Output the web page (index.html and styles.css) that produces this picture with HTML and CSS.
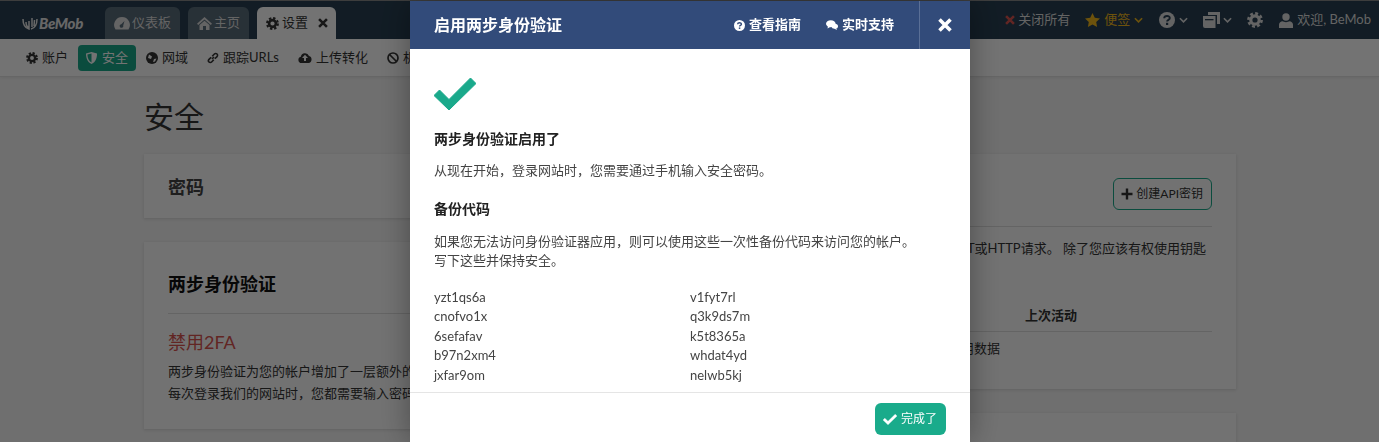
FILE: index.html
```html
<!DOCTYPE html>
<html lang="en">
<head>
  <meta charset="UTF-8">
  <title>BeMob - 安全</title>
  <link rel="stylesheet" href="styles.css">
</head>
<body>
  <svg class="icon-defs" width="0" height="0">
    <defs>
      <symbol id="i-gear" viewBox="0 0 16 16">
        <circle cx="8" cy="8" r="4.2" fill="none" stroke="currentColor" stroke-width="3.2"/>
        <circle cx="8" cy="8" r="6.6" fill="none" stroke="currentColor" stroke-width="2.6" stroke-dasharray="2.9 2.28"/>
      </symbol>
      <symbol id="i-check" viewBox="0 0 42 32">
        <path d="M0 17.5 L5.5 12 L15 21.5 L36.5 0 L42 5.5 L15 32 Z" fill="currentColor" stroke="currentColor" stroke-width="1" stroke-linejoin="round"/>
      </symbol>
      <symbol id="i-x" viewBox="0 0 14 14">
        <path d="M1.5 1.5 L12.5 12.5 M12.5 1.5 L1.5 12.5" fill="none" stroke="currentColor" stroke-width="3.6"/>
      </symbol>
      <symbol id="i-chev" viewBox="0 0 10 6">
        <path d="M1 1 L5 5 L9 1" fill="none" stroke="currentColor" stroke-width="1.8"/>
      </symbol>
    </defs>
  </svg>

  <header class="topbar">
    <div class="logo">
      <svg width="16" height="13" viewBox="0 0 16 13"><path d="M1 2 C1 8 3 11 7 12 L7 4 M9 12 C13 11 15 8 15 2 M4 5 C4 8 5 10 7 11 M10 1 L10 10 M12.500 3 L12 9" fill="none" stroke="currentColor" stroke-width="1.500"/></svg>
      <span>BeMob</span>
    </div>
    <nav class="tabs">
      <a class="tab">
        <svg width="16" height="13" viewBox="0 0 16 13"><path fill-rule="evenodd" d="M8 0 A8 8 0 0 1 14.500 12.500 L1.500 12.500 A8 8 0 0 1 8 0 Z M10.500 4 L7.300 7.200 A1.800 1.800 0 1 0 9.200 8.500 Z" fill="currentColor"/></svg>
        仪表板
      </a>
      <a class="tab">
        <svg width="15" height="13" viewBox="0 0 15 13"><path d="M7.500 0 L15 6.800 L13.800 8 L7.500 2.400 L1.200 8 L0 6.800 Z M2.500 8 L7.500 3.700 L12.500 8 L12.500 13 L9 13 L9 9 L6 9 L6 13 L2.500 13 Z" fill="currentColor"/></svg>
        主页
      </a>
      <a class="tab tab-on">
        <svg width="13" height="13"><use href="#i-gear"/></svg>
        设置
        <svg class="tab-x" width="10" height="10"><use href="#i-x"/></svg>
      </a>
    </nav>
    <div class="top-right">
      <a class="top-item"><svg class="close-red" width="10" height="10"><use href="#i-x"/></svg>关闭所有</a>
      <a class="top-item notes">
        <svg width="15" height="14" viewBox="0 0 15 14"><path d="M7.500 0 L9.800 4.700 L15 5.400 L11.200 9 L12.100 14 L7.500 11.600 L2.900 14 L3.800 9 L0 5.400 L5.200 4.700 Z" fill="currentColor"/></svg>
        便签
        <svg width="9" height="6"><use href="#i-chev"/></svg>
      </a>
      <a class="top-item help">
        <svg width="16" height="16" viewBox="0 0 16 16"><circle cx="8" cy="8" r="8" fill="currentColor"/><path d="M5.200 6.200 C5.300 3.300 10.800 3.200 10.800 6.100 C10.800 8 8.100 7.800 8.100 9.600" fill="none" stroke="#283f52" stroke-width="1.900"/><rect x="7" y="10.800" width="2.200" height="2.200" fill="#283f52"/></svg>
        <svg width="9" height="6"><use href="#i-chev"/></svg>
      </a>
      <a class="top-item copy">
        <svg width="17" height="16" viewBox="0 0 17 16"><path d="M5 0 H17 V12 H14 V3 H5 Z M0 4 H12.500 V16 H2 A2 2 0 0 1 0 14 Z" fill="currentColor"/><rect x="2" y="7" width="8.500" height="1.300" fill="#283f52"/></svg>
        <svg width="9" height="6"><use href="#i-chev"/></svg>
      </a>
      <a class="top-item gear"><svg width="16" height="16"><use href="#i-gear"/></svg></a>
      <a class="top-item user">
        <svg width="14" height="15" viewBox="0 0 14 15"><circle cx="7" cy="4" r="3.700"/><path d="M0 15 V11.500 C0 9.500 2 8.500 3.500 8.300 C5 9.400 9 9.400 10.500 8.300 C12 8.500 14 9.500 14 11.500 V15 Z"/></svg>
        欢迎, BeMob
      </a>
    </div>
  </header>

  <nav class="subnav">
    <a class="sub"><svg width="12" height="12"><use href="#i-gear"/></svg>账户</a>
    <a class="sub sub-on">
      <svg width="11" height="12" viewBox="0 0 11 12"><path d="M0 1.500 L5.500 0 L11 1.500 C11 7 9 10.500 5.500 12 C2 10.500 0 7 0 1.500 Z" fill="currentColor"/><path d="M5.500 1.500 V10.500 C3 9.200 1.500 6.500 1.400 2.600 Z" fill="#1aa98b"/></svg>
      安全
    </a>
    <a class="sub">
      <svg width="12" height="12" viewBox="0 0 12 12"><circle cx="6" cy="6" r="6" fill="currentColor"/><path d="M3 2.500 L6 4.500 L5 7 L2 6 Z M8 7 L10.500 6.500 L9 9.500 L7 10 Z" fill="#fff"/></svg>
      网域
    </a>
    <a class="sub">
      <svg width="12" height="12" viewBox="0 0 12 12"><path d="M5 7 L7 5 M4.200 5.200 L2 7.400 A1.800 1.800 0 0 0 4.600 10 L6.800 7.800 M5.200 4.200 L7.400 2 A1.800 1.800 0 0 1 10 4.600 L7.800 6.800" fill="none" stroke="currentColor" stroke-width="1.600"/></svg>
      跟踪URLs
    </a>
    <a class="sub">
      <svg width="14" height="11" viewBox="0 0 14 11"><path d="M3.500 11 A3.200 3.200 0 0 1 2.800 4.700 A4.300 4.300 0 0 1 11 4 A3.600 3.600 0 0 1 10.500 11 Z" fill="currentColor"/><path d="M7 2.800 L10 6 H8 V9 H6 V6 H4 Z" fill="#fff"/></svg>
      上传转化
    </a>
    <a class="sub">
      <svg width="12" height="12" viewBox="0 0 12 12"><circle cx="6" cy="6" r="5" fill="none" stroke="currentColor" stroke-width="1.700"/><path d="M2.500 2.500 L9.500 9.500" stroke="currentColor" stroke-width="1.700"/></svg>
      机器人
    </a>
  </nav>

  <main class="page">
    <h1 class="page-title">安全</h1>
    <div class="cols">
      <div class="col">
        <section class="card card-pass"><h3>密码</h3></section>
        <section class="card card-2fa">
          <h3 class="card-head">两步身份验证</h3>
          <h4 class="danger">禁用2FA</h4>
          <p>两步身份验证为您的帐户增加了一层额外的<br>每次登录我们的网站时，您都需要输入密码</p>
        </section>
      </div>
      <div class="col">
        <section class="card card-api">
          <div class="api-head">
            <button class="btn-outline">
              <svg width="12" height="12" viewBox="0 0 12 12"><path d="M6 0.500 V11.500 M0.500 6 H11.500" stroke="currentColor" stroke-width="2.400"/></svg>
              创建API密钥
            </button>
          </div>
          <div class="api-text"><span>GET或HTTP请求。 除了您应该有权使用钥匙</span></div>
          <div class="api-table">
            <div class="api-th">上次活动</div>
            <div class="api-td">可用数据</div>
          </div>
        </section>
        <section class="card card-next"></section>
      </div>
    </div>
  </main>

  <div class="overlay"></div>

  <div class="modal">
    <div class="modal-head">
      <h2>启用两步身份验证</h2>
      <a class="head-link">
        <svg width="11" height="11" viewBox="0 0 16 16"><circle cx="8" cy="8" r="8" fill="#fff"/><path d="M5.200 6.200 C5.300 3.300 10.800 3.200 10.800 6.100 C10.800 8 8.100 7.800 8.100 9.600" fill="none" stroke="#324b7a" stroke-width="2"/><rect x="7" y="10.800" width="2.200" height="2.200" fill="#324b7a"/></svg>
        查看指南
      </a>
      <a class="head-link">
        <svg width="12" height="10" viewBox="0 0 12 10"><ellipse cx="4.800" cy="3.800" rx="4.800" ry="3.500" fill="#fff"/><path d="M2 6 L1.500 8.500 L5 6.500 Z" fill="#fff"/><ellipse cx="8.800" cy="6.300" rx="3.200" ry="2.500" fill="#fff"/><path d="M10 8 L11 10 L8 8.500 Z" fill="#fff"/></svg>
        实时支持
      </a>
      <button class="modal-close"><svg width="14" height="14"><use href="#i-x"/></svg></button>
    </div>
    <div class="modal-body">
      <svg class="big-check" width="42" height="32"><use href="#i-check"/></svg>
      <h4>两步身份验证启用了</h4>
      <p>从现在开始，登录网站时，您需要通过手机输入安全密码。</p>
      <h4 class="backup-head">备份代码</h4>
      <p>如果您无法访问身份验证器应用，则可以使用这些一次性备份代码来访问您的帐户。<br>写下这些并保持安全。</p>
      <div class="codes">
        <span>yzt1qs6a</span><span>v1fyt7rl</span>
        <span>cnofvo1x</span><span>q3k9ds7m</span>
        <span>6sefafav</span><span>k5t8365a</span>
        <span>b97n2xm4</span><span>whdat4yd</span>
        <span>jxfar9om</span><span>nelwb5kj</span>
      </div>
    </div>
    <div class="modal-foot">
      <button class="btn-done"><svg width="14" height="11"><use href="#i-check"/></svg>完成了</button>
    </div>
  </div>
</body>
</html>
```

FILE: styles.css
```css
* {
  box-sizing: border-box;
}
html,
body {
  height: 442px;
  overflow: hidden;
}
body {
  margin: 0;
  background: #f5f5f5;
  color: #333;
  font-family: Lato, "Noto Sans CJK SC", sans-serif;
  font-size: 13px;
  line-height: 19.5px;
}
svg {
  flex: none;
}
.icon-defs {
  position: absolute;
}
h1, h2, h3, h4, p {
  margin: 0;
}

/* Top bar */
.topbar {
  display: flex;
  align-items: flex-end;
  height: 39px;
  padding-left: 22px;
  background: #283f52;
  border-top: 1px solid #888;
  color: #ddd;
}
.logo {
  display: flex;
  align-items: center;
  gap: 1px;
  width: 83px;
  height: 31px;
  color: #e5e5e5;
  font-size: 15px;
  font-weight: 900;
  font-style: italic;
  letter-spacing: -0.3px;
}
.tabs {
  display: flex;
  gap: 8px;
}
.tab {
  display: flex;
  align-items: center;
  gap: 2px;
  height: 32px;
  padding: 0 9px;
  background: #5a6d7b;
  border-radius: 6px 6px 0 0;
  color: #ddd;
}
.tab-on {
  gap: 3px;
  padding: 0 8px 0 9px;
  background: #fff;
  color: #333;
}
.tab-x {
  margin-left: 7px;
}
.top-right {
  display: flex;
  align-items: center;
  align-self: center;
  margin-left: auto;
  padding-right: 8px;
}
.top-item {
  display: flex;
  align-items: center;
  gap: 3px;
  color: #ddd;
}
.close-red {
  color: #d9534f;
}
.notes {
  margin-left: 15px;
  color: #f1b71c;
  gap: 4px;
}
.help {
  margin-left: 16px;
  gap: 4px;
}
.copy {
  margin-left: 15px;
}
.gear {
  margin-left: 15px;
}
.user {
  margin-left: 16px;
  gap: 4px;
  fill: #ddd;
}

/* Second row of links */
.subnav {
  display: flex;
  align-items: center;
  gap: 1px;
  height: 38px;
  padding-left: 17px;
  background: #fff;
  border-bottom: 1px solid #e2e2e2;
  box-shadow: 0 1px 3px rgba(0, 0, 0, 0.06);
}
.sub {
  display: flex;
  align-items: center;
  gap: 4px;
  height: 26px;
  padding: 0 9px;
  border-radius: 4px;
  white-space: nowrap;
}
.sub-on {
  gap: 5px;
  padding: 0 8px;
  background: #1aa98b;
  color: #fff;
}

/* Page body */
.page {
  padding: 20px 143px 0 144px;
}
.page-title {
  height: 38px;
  margin-bottom: 19px;
  font-size: 30px;
  font-weight: 400;
  line-height: 38px;
}
.cols {
  display: grid;
  grid-template-columns: 1fr 1fr;
  gap: 24px;
}
.col {
  display: flex;
  flex-direction: column;
  gap: 24px;
  min-width: 0;
}
.card {
  padding: 0 24px;
  background: #fdfdfd;
  box-shadow: 0 1px 3px rgba(0, 0, 0, 0.12);
}
.card-pass {
  display: flex;
  align-items: center;
  height: 64px;
  padding-top: 4px;
}
.card-pass h3 {
  font-size: 18px;
  font-weight: 700;
  color: #444;
}
.card-2fa {
  height: 187px;
  padding-top: 29px;
}
.card-head {
  height: 31px;
  padding-bottom: 11px;
  font-size: 18px;
  font-weight: 700;
  line-height: 26px;
  color: #111;
  box-sizing: content-box;
  border-bottom: 1px solid #ddd;
}
.danger {
  margin: 15px 0 5px;
  color: #d9534f;
  font-size: 18px;
  font-weight: 400;
  line-height: 26px;
}
.card-2fa p {
  line-height: 22px;
  white-space: nowrap;
}
.card-api {
  height: 235px;
}
.api-head {
  display: flex;
  justify-content: flex-end;
  align-items: flex-start;
  height: 73px;
  padding-top: 24px;
  border-bottom: 1px solid #ddd;
}
.btn-outline {
  display: flex;
  align-items: center;
  gap: 3px;
  height: 32px;
  padding: 0 8px 0 7px;
  background: transparent;
  border: 1px solid #1aa98b;
  border-radius: 6px;
  color: #333;
  font: inherit;
  font-size: 12px;
}
.api-text {
  display: flex;
  justify-content: flex-end;
  margin-top: 12px;
  padding-right: 6px;
  white-space: nowrap;
}
.api-table {
  margin-top: 47px;
}
.api-th {
  height: 26px;
  padding-left: 299px;
  border-bottom: 1px solid #ddd;
  font-weight: 700;
}
.api-td {
  margin: 7px 0 0 222px;
  white-space: nowrap;
}
.card-next {
  height: 29px;
}

/* Dim layer and dialog */
.overlay {
  position: fixed;
  inset: 0;
  background: rgba(0, 0, 0, 0.55);
}
.modal {
  position: fixed;
  top: 1px;
  left: 410px;
  width: 560px;
  height: 441px;
  background: #fff;
  box-shadow: 0 0 30px rgba(0, 0, 0, 0.35);
}
.modal-head {
  display: flex;
  align-items: center;
  height: 48px;
  padding-left: 24px;
  background: #324b7a;
  color: #fff;
}
.modal-head h2 {
  margin-right: auto;
  font-size: 16px;
  font-weight: 700;
}
.head-link {
  display: flex;
  align-items: center;
  gap: 4px;
  margin-right: 25px;
  font-weight: 700;
  white-space: nowrap;
}
.modal-close {
  display: flex;
  align-items: center;
  justify-content: center;
  width: 51px;
  height: 48px;
  padding: 0;
  background: none;
  border: 0;
  border-left: 1px solid #5a6f96;
  color: #fff;
}
.modal-body {
  height: 343px;
  padding: 29px 24px 0;
  color: #444;
}
.big-check {
  display: block;
  margin-bottom: 18px;
  color: #1aa98b;
}
.modal-body h4 {
  margin-bottom: 12px;
  font-size: 14px;
  font-weight: 700;
  line-height: 21px;
  color: #222;
}
.modal-body p {
  margin-bottom: 17px;
}
.modal-body .backup-head {
  margin-bottom: 13px;
}
.codes {
  display: grid;
  grid-template-columns: 256px 1fr;
}
.modal-foot {
  display: flex;
  justify-content: flex-end;
  align-items: flex-start;
  height: 50px;
  padding: 10px 24px 0 0;
  border-top: 1px solid #e5e5e5;
}
.btn-done {
  display: flex;
  align-items: center;
  gap: 4px;
  height: 32px;
  padding: 0 9px 0 8px;
  background: #1aab8b;
  border: 0;
  border-radius: 6px;
  color: #fff;
  font: inherit;
  font-size: 12px;
}
```
